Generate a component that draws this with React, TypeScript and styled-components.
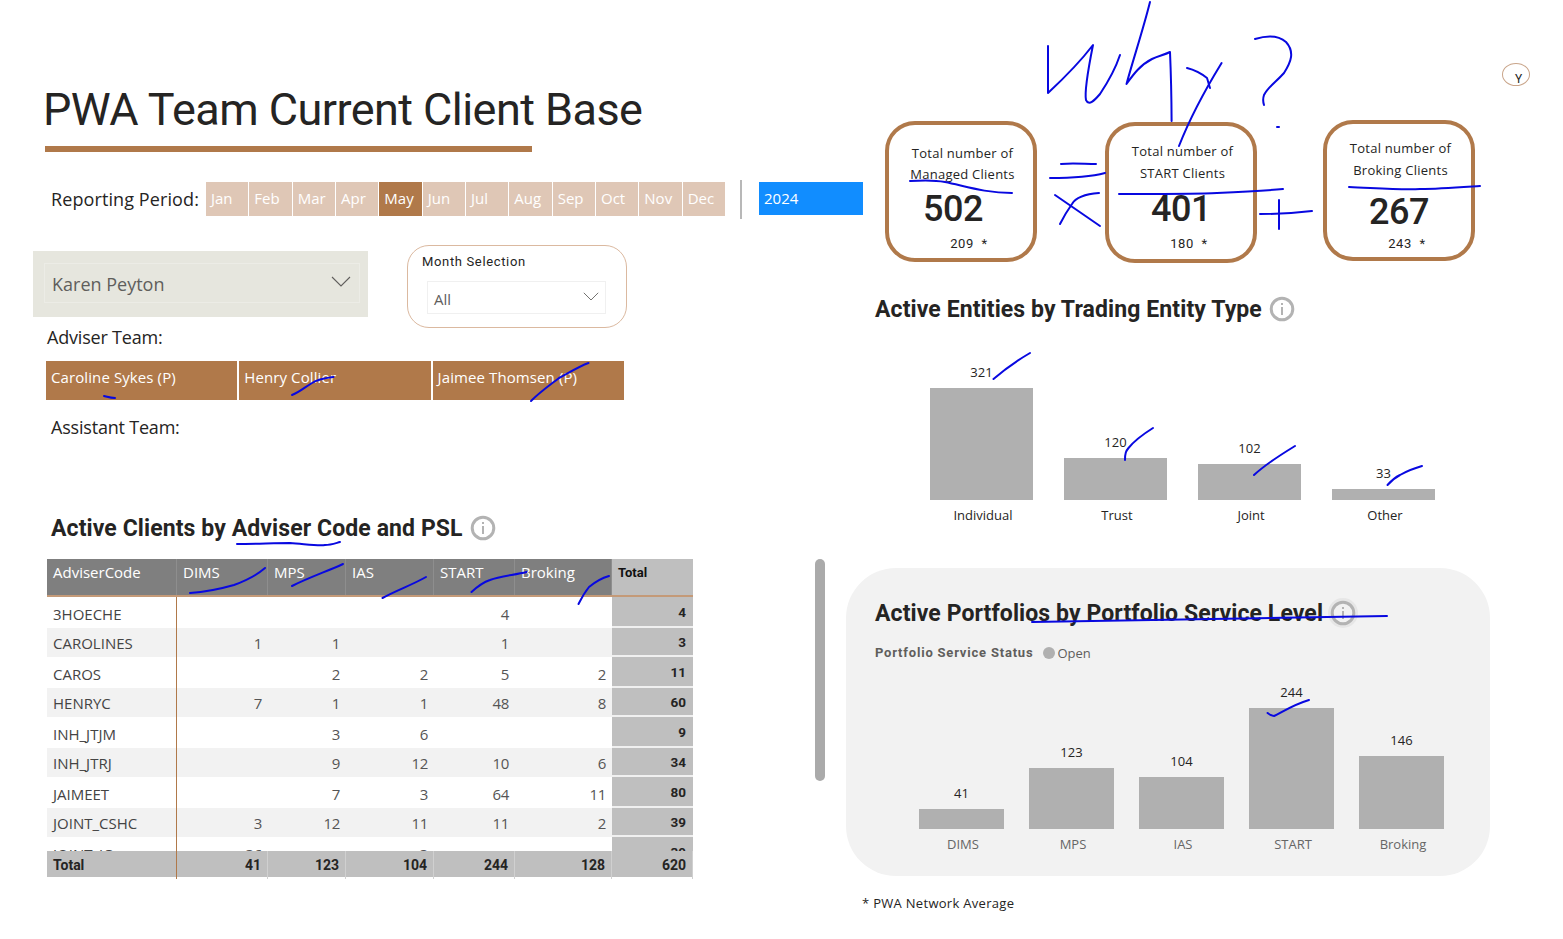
import React, { FunctionComponent } from "react";
import styled, { createGlobalStyle } from "styled-components";

const BODY = `"Open Sans", "Liberation Sans", sans-serif`;
const DIN = `Roboto, "Liberation Sans", sans-serif`;
const BROWN = "#b0794a";

const GlobalStyle = createGlobalStyle`
  html, body {
    margin: 0;
    padding: 0;
    background: #ffffff;
    overflow: hidden;
  }
  * { box-sizing: border-box; }
`;

const Page = styled.div`
  position: relative;
  width: 1563px;
  height: 939px;
  display: flex;
  font-family: ${BODY};
  color: #252423;
  overflow: hidden;
`;

const LeftColumn = styled.div`
  width: 815px;
  flex: none;
  padding-top: 82px;
`;

const Title = styled.h1`
  margin: 0 0 0 43px;
  font: 400 45px/55px ${DIN};
  letter-spacing: -0.55px;
  color: #252423;
`;

const TitleRule = styled.div`
  margin: 9px 0 0 45px;
  width: 487px;
  height: 6px;
  background: ${BROWN};
`;

const PeriodRow = styled.div`
  display: flex;
  align-items: center;
  margin: 27px 0 0 51px;
  height: 40px;
  & > * { flex: none; }
`;

const PeriodLabel = styled.div`
  width: 155px;
  font-size: 18px;
  letter-spacing: 0.1px;
`;

const MonthGrid = styled.div`
  display: grid;
  grid-template-columns: repeat(12, 1fr);
  gap: 1px;
  width: 519px;
  height: 34px;
`;

const MonthTile = styled.div<{ $on?: boolean }>`
  padding-left: 5px;
  font-size: 15px;
  line-height: 33px;
  color: #ffffff;
  background: ${(p) => (p.$on ? BROWN : "#dfc7b6")};
`;

const PeriodDivider = styled.div`
  width: 2px;
  height: 39px;
  margin: 0 17px 0 15px;
  background: #b8b8b8;
`;

const YearBox = styled.div`
  width: 104px;
  height: 33px;
  margin-bottom: 1px;
  padding-left: 5px;
  font-size: 15px;
  line-height: 32px;
  color: #ffffff;
  background: #118dff;
`;

const SelectRow = styled.div`
  display: flex;
  align-items: flex-start;
  margin: 26px 0 0 33px;
`;

const PersonSelect = styled.div`
  width: 335px;
  height: 66px;
  margin-top: 6px;
  padding: 12px 8px 14px 11px;
  background: #e6e6de;
`;

const PersonInner = styled.div`
  display: flex;
  align-items: center;
  justify-content: space-between;
  height: 40px;
  padding: 2px 8px 0 7px;
  border: 1px solid #ecece6;
  font-size: 18px;
  color: #605e5c;
  & > svg { margin-top: -6px; }
`;

const MonthCard = styled.div`
  width: 220px;
  height: 83px;
  margin-left: 39px;
  padding: 7px 14px;
  border: 1px solid #dbb9a0;
  border-radius: 22px;
`;

const MonthCardLabel = styled.div`
  font: 400 13px/17px ${DIN};
  letter-spacing: 0.65px;
  color: #252423;
`;

const MonthSelect = styled.div`
  display: flex;
  align-items: center;
  justify-content: space-between;
  height: 33px;
  margin: 11px 0 0 5px;
  width: 179px;
  padding: 3px 6px 0;
  border: 1px solid #f0f0f0;
  font-size: 15px;
  color: #605e5c;
  & > svg { margin-top: -5px; }
`;

const TeamLabel = styled.div<{ $left: number; $top: number }>`
  margin: ${(p) => p.$top}px 0 0 ${(p) => p.$left}px;
  font-size: 18px;
  line-height: 24px;
  letter-spacing: -0.2px;
`;

const TeamRow = styled.div`
  display: flex;
  gap: 2px;
  margin: 12px 0 0 46px;
`;

const TeamTile = styled.div`
  width: 191.3px;
  height: 39px;
  padding-left: 5px;
  font-size: 15px;
  line-height: 32px;
  letter-spacing: 0.1px;
  color: #ffffff;
  background: ${BROWN};
`;

const Heading = styled.h2<{ $left: number; $top: number }>`
  display: flex;
  align-items: center;
  gap: 8px;
  margin: ${(p) => p.$top}px 0 0 ${(p) => p.$left}px;
  font: 700 23px/30px ${DIN};
  letter-spacing: 0.1px;
  color: #252423;
`;

const ClientTable = styled.div`
  width: 646px;
  margin: 14px 0 0 47px;
`;

const COLUMNS = "130px 91px 78px 88px 81px 97px 81px";

const TableHead = styled.div`
  display: grid;
  grid-template-columns: ${COLUMNS};
  height: 38px;
  border-bottom: 2px solid #c49a78;
`;

const HeadCell = styled.div`
  padding-left: 6px;
  font-size: 15px;
  line-height: 27px;
  color: #ffffff;
  background: #7f7f7f;
  border-right: 1px solid #8e8e8e;
`;

const HeadTotal = styled.div`
  padding-left: 6px;
  font: 700 13px/28px ${DIN};
  color: #111111;
  background: #bfbfbf;
`;

const TableBody = styled.div`
  height: 254px;
  overflow: hidden;
`;

const BodyRow = styled.div<{ $odd: boolean }>`
  display: grid;
  grid-template-columns: ${COLUMNS};
  height: ${(p) => (p.$odd ? 29 : 31)}px;
  background: ${(p) => (p.$odd ? "#f2f2f2" : "#ffffff")};
`;

const CodeCell = styled.div<{ $odd: boolean }>`
  padding: ${(p) => (p.$odd ? 5 : 7)}px 0 0 6px;
  font-size: 15px;
  line-height: 20px;
  color: #444444;
  border-right: 1px solid ${BROWN};
`;

const NumCell = styled.div<{ $odd: boolean }>`
  padding: ${(p) => (p.$odd ? 5 : 7)}px 6px 0 0;
  font-size: 15px;
  line-height: 20px;
  text-align: right;
  letter-spacing: -0.3px;
  color: #555555;
`;

const TotalCell = styled.div<{ $odd: boolean }>`
  padding: ${(p) => (p.$odd ? 4 : 5)}px 7px 0 0;
  font: 700 13.5px/20px ${DIN};
  text-align: right;
  color: #252423;
  background: #bfbfbf;
  border-bottom: 2px solid #f0f0f0;
`;

const FootRow = styled.div`
  display: grid;
  grid-template-columns: ${COLUMNS};
  height: 26px;
  background: #bfbfbf;
`;

const FootLabel = styled.div`
  padding-left: 6px;
  font: 700 14px/28px ${DIN};
  color: #252423;
  border-right: 1px solid ${BROWN};
`;

const FootNum = styled.div`
  padding-right: 6px;
  font: 700 14px/28px ${DIN};
  text-align: right;
  color: #252423;
  border-right: 1px solid #d0d0d0;
`;

const ScrollThumb = styled.div`
  flex: none;
  width: 10px;
  height: 222px;
  margin-top: 559px;
  border-radius: 5px;
  background: #aaaaaa;
`;

const RightColumn = styled.div`
  width: 700px;
  flex: none;
  padding-left: 21px;
`;

const KpiRow = styled.div`
  display: flex;
  align-items: flex-start;
  height: 263px;
  padding: 120px 0 0 39px;
`;

const KpiCard = styled.div<{ $gap: number; $drop: number; $pad: number }>`
  display: flex;
  flex-direction: column;
  align-items: center;
  width: 152px;
  height: 141px;
  margin: ${(p) => p.$drop}px ${(p) => p.$gap}px 0 0;
  padding-top: ${(p) => p.$pad}px;
  border: 4px solid ${BROWN};
  border-radius: 30px;
`;

const KpiCaption = styled.div<{ $line: number }>`
  padding-left: 3px;
  font-size: 13px;
  line-height: ${(p) => p.$line}px;
  text-align: center;
  letter-spacing: 0.25px;
  color: #252423;
`;

const KpiValue = styled.div<{ $top: number; $offset: number }>`
  margin: ${(p) => p.$top}px ${(p) => p.$offset}px 0 0;
  font: 500 36px/42px ${DIN};
  letter-spacing: -0.5px;
  color: #252423;
`;

const KpiNote = styled.div<{ $top: number }>`
  margin-top: ${(p) => p.$top}px;
  padding-left: 16px;
  font: 400 13px/18px ${DIN};
  letter-spacing: 0.6px;
  color: #252423;
`;

const EntityChart = styled.div`
  display: flex;
  align-items: flex-end;
  gap: 31px;
  height: 172px;
  margin: 2px 0 0 84px;
`;

const EntityBar = styled.div`
  display: flex;
  flex-direction: column;
  align-items: center;
  width: 103px;
`;

const BarValue = styled.div`
  margin-bottom: 7px;
  font-size: 13px;
  line-height: 18px;
  color: #252423;
`;

const BarFill = styled.div`
  width: 100%;
  background: #b0b0b0;
`;

const EntityLabels = styled.div`
  display: flex;
  gap: 31px;
  margin: 5px 0 0 84px;
`;

const BarLabel = styled.div<{ $width: number; $muted?: boolean }>`
  width: ${(p) => p.$width}px;
  padding-left: 3px;
  font-size: 13px;
  line-height: 20px;
  text-align: center;
  color: ${(p) => (p.$muted ? "#666666" : "#252423")};
`;

const PortfolioPanel = styled.div`
  width: 644px;
  height: 308px;
  margin-top: 43px;
  padding: 30px 0 0 29px;
  border-radius: 50px;
  background: #f2f2f2;
`;

const Legend = styled.div`
  display: flex;
  align-items: center;
  margin-top: 14px;
  font-size: 13px;
  line-height: 18px;
  color: #605e5c;
`;

const LegendTitle = styled.span`
  margin-right: 10px;
  font: 700 13px/18px ${DIN};
  letter-spacing: 0.8px;
`;

const LegendDot = styled.span`
  width: 12px;
  height: 12px;
  margin-right: 2px;
  border-radius: 50%;
  background: #b0b0b0;
`;

const PortfolioChart = styled.div`
  display: flex;
  align-items: flex-end;
  gap: 25px;
  height: 153px;
  margin: 14px 0 0 44px;
`;

const PortfolioBar = styled(EntityBar)`
  width: 85px;
`;

const PortfolioLabels = styled.div`
  display: flex;
  gap: 25px;
  margin: 5px 0 0 44px;
`;

const Footnote = styled.div`
  margin: 17px 0 0 16px;
  font-size: 13px;
  line-height: 20px;
  letter-spacing: 0.3px;
  color: #252423;
`;

const ClusterBubble = styled.div`
  position: absolute;
  left: 1502px;
  top: 63px;
  width: 28px;
  height: 23px;
  padding: 8px 0 0 12px;
  border: 1px solid #c9a58a;
  border-radius: 50%;
  font: 400 12px/14px ${DIN};
  color: #252423;
`;

const Scribbles = styled.svg`
  position: absolute;
  left: 0;
  top: 0;
  pointer-events: none;
`;

const Chevron: FunctionComponent<{ size: number }> = ({ size }) => (
  <svg width={size} height={size * 0.55} viewBox="0 0 20 11" fill="none">
    <path d="M1 1l9 9 9-9" stroke="#605e5c" strokeWidth="1.1" />
  </svg>
);

const InfoIcon: FunctionComponent<{ halo?: boolean }> = ({ halo }) => (
  <svg width="32" height="32" viewBox="0 0 32 32" style={{ margin: "-1px -4px 1px" }}>
    {halo && <circle cx="16" cy="16" r="15" fill="#e6e6e6" />}
    <circle cx="16" cy="16" r="10.8" fill={halo ? "#f2f2f2" : "#ffffff"} stroke="#b3b3b3" strokeWidth="3" />
    <rect x="15" y="14" width="2" height="8" fill="#b3b3b3" />
    <rect x="15" y="10" width="2" height="2" fill="#b3b3b3" />
  </svg>
);

const months = ["Jan", "Feb", "Mar", "Apr", "May", "Jun", "Jul", "Aug", "Sep", "Oct", "Nov", "Dec"];

const rows: [string, string, string, string, string, string, string][] = [
  ["3HOECHE", "", "", "", "4", "", "4"],
  ["CAROLINES", "1", "1", "", "1", "", "3"],
  ["CAROS", "", "2", "2", "5", "2", "11"],
  ["HENRYC", "7", "1", "1", "48", "8", "60"],
  ["INH_JTJM", "", "3", "6", "", "", "9"],
  ["INH_JTRJ", "", "9", "12", "10", "6", "34"],
  ["JAIMEET", "", "7", "3", "64", "11", "80"],
  ["JOINT_CSHC", "3", "12", "11", "11", "2", "39"],
  ["JOINT_JC", "36", "", "3", "", "", "39"],
];

const kpis = [
  { top: "Managed Clients", value: "502", note: "209", gap: 68, drop: 1, pad: 18, line: 21, valueTop: 3, offset: 16, noteTop: 5 },
  { top: "START Clients", value: "401", note: "180", gap: 66, drop: 2, pad: 14, line: 22, valueTop: 4, offset: 0, noteTop: 5 },
  { top: "Broking Clients", value: "267", note: "243", gap: 0, drop: 0, pad: 13, line: 22, valueTop: 10, offset: 0, noteTop: 2 },
];

const entities = [
  { name: "Individual", value: 321, height: 112 },
  { name: "Trust", value: 120, height: 42 },
  { name: "Joint", value: 102, height: 36 },
  { name: "Other", value: 33, height: 11 },
];

const portfolios = [
  { name: "DIMS", value: 41, height: 20 },
  { name: "MPS", value: 123, height: 61 },
  { name: "IAS", value: 104, height: 52 },
  { name: "START", value: 244, height: 121 },
  { name: "Broking", value: 146, height: 73 },
];

const strokes = [
  // why ?
  "M1048 46L1048 93C1062 80 1080 62 1093 45C1089 65 1084 90 1086 100C1089 106 1094 101 1100 94C1108 82 1115 70 1120 55",
  "M1150 2C1143 30 1133 60 1126.5 84C1133 75 1140 65 1152 59C1158 56 1164 55 1170 52C1171 75 1171.5 100 1171.6 121",
  "M1187 68C1195 70 1202 74 1207 78C1208 81 1209 85 1210 88",
  "M1221.6 63C1205 90 1190 118 1179 146",
  "M1255 39C1265 36 1278 35 1286 42C1295 52 1291 62 1284 73C1276 82 1268 87 1264 95C1263 98 1263 102 1264 105",
  "M1277 127L1279 127",
  // = x +
  "M1061 164C1072 163 1085 164 1096 164",
  "M1050 178C1068 178 1090 177 1105 173",
  "M1055 195L1100 226",
  "M1099 193C1085 194 1076 197 1072 204C1067 211 1063 218 1060 224",
  "M1260 214C1280 214 1295 213 1312 211",
  "M1279 200L1279 229",
  // kpi underlines
  "M910 181C925 180 935 180 945 182C965 186 985 193 1012 193",
  "M1119 194C1160 194 1200 194 1217 193C1240 192 1262 191 1283 189",
  "M1349 187C1375 188 1400 190 1420 189C1440 189 1465 187 1480 186",
  // adviser tiles
  "M104 396C108 397 111 398 115 398",
  "M292 395C300 392 305 387 312 383C318 379 326 378 333.5 377",
  "M531 401C540 392 550 385 559 378C570 372 580 366 588.5 363",
  // table heading + header cells
  "M237 544C255 544 275 543 290 543C305 544 318 546 325 545C331 545 336 543 340 542",
  "M190 593C205 592 220 589 234 585C245 581 257 575 265 568",
  "M292 586C310 577 328 571 343 564",
  "M382.5 598C397 590 412 585 426 577",
  "M471.5 592C478 586 484 582 490 580C500 576 515 575 526.5 572",
  "M578.5 604C582 597 585 592 589 587C595 582 602 578 609 576",
  // entity bars
  "M993.5 379C1005 369 1018 360 1030 353",
  "M1125 460C1125 453 1126 451 1128.5 448C1135 440 1145 433 1153 428",
  "M1254 475C1267 463 1282 454 1295 446",
  "M1387.5 485C1392 480 1396 477 1400 475C1407 471 1415 468 1422 466",
  // portfolio panel
  "M1032 622C1090 621 1150 620 1212 619C1270 618 1330 617 1387 616",
  "M1267.6 713C1270 715 1272 716 1274 716C1282 712 1295 704 1309 700",
];

const App: FunctionComponent = () => {
  return (
    <>
      <GlobalStyle />
      <Page>
        <LeftColumn>
          <Title>PWA Team Current Client Base</Title>
          <TitleRule />
          <PeriodRow>
            <PeriodLabel>Reporting Period:</PeriodLabel>
            <MonthGrid>
              {months.map((m) => (
                <MonthTile key={m} $on={m === "May"}>{m}</MonthTile>
              ))}
            </MonthGrid>
            <PeriodDivider />
            <YearBox>2024</YearBox>
          </PeriodRow>
          <SelectRow>
            <PersonSelect>
              <PersonInner>
                Karen Peyton
                <Chevron size={20} />
              </PersonInner>
            </PersonSelect>
            <MonthCard>
              <MonthCardLabel>Month Selection</MonthCardLabel>
              <MonthSelect>
                All
                <Chevron size={16} />
              </MonthSelect>
            </MonthCard>
          </SelectRow>
          <TeamLabel $left={47} $top={-3}>Adviser Team:</TeamLabel>
          <TeamRow>
            <TeamTile>Caroline Sykes (P)</TeamTile>
            <TeamTile>Henry Collier</TeamTile>
            <TeamTile>Jaimee Thomsen (P)</TeamTile>
          </TeamRow>
          <TeamLabel $left={51} $top={15}>Assistant Team:</TeamLabel>
          <Heading $left={51} $top={74}>
            Active Clients by Adviser Code and PSL
            <InfoIcon />
          </Heading>
          <ClientTable>
            <TableHead>
              <HeadCell>AdviserCode</HeadCell>
              <HeadCell>DIMS</HeadCell>
              <HeadCell>MPS</HeadCell>
              <HeadCell>IAS</HeadCell>
              <HeadCell>START</HeadCell>
              <HeadCell>Broking</HeadCell>
              <HeadTotal>Total</HeadTotal>
            </TableHead>
            <TableBody>
              {rows.map((r, i) => {
                const odd = i % 2 === 1;
                return (
                  <BodyRow key={r[0]} $odd={odd}>
                    <CodeCell $odd={odd}>{r[0]}</CodeCell>
                    {r.slice(1, 6).map((v, j) => (
                      <NumCell key={j} $odd={odd}>{v}</NumCell>
                    ))}
                    <TotalCell $odd={odd}>{r[6]}</TotalCell>
                  </BodyRow>
                );
              })}
            </TableBody>
            <FootRow>
              <FootLabel>Total</FootLabel>
              <FootNum>41</FootNum>
              <FootNum>123</FootNum>
              <FootNum>104</FootNum>
              <FootNum>244</FootNum>
              <FootNum>128</FootNum>
              <FootNum>620</FootNum>
            </FootRow>
          </ClientTable>
        </LeftColumn>
        <ScrollThumb />
        <RightColumn>
          <KpiRow>
            {kpis.map((k) => (
              <KpiCard key={k.value} $gap={k.gap} $drop={k.drop} $pad={k.pad}>
                <KpiCaption $line={k.line}>Total number of<br />{k.top}</KpiCaption>
                <KpiValue $top={k.valueTop} $offset={k.offset}>{k.value}</KpiValue>
                <KpiNote $top={k.noteTop}>{k.note} &nbsp;*</KpiNote>
              </KpiCard>
            ))}
          </KpiRow>
          <Heading $left={29} $top={31}>
            Active Entities by Trading Entity Type
            <InfoIcon />
          </Heading>
          <EntityChart>
            {entities.map((e) => (
              <EntityBar key={e.name}>
                <BarValue>{e.value}</BarValue>
                <BarFill style={{ height: e.height }} />
              </EntityBar>
            ))}
          </EntityChart>
          <EntityLabels>
            {entities.map((e) => (
              <BarLabel key={e.name} $width={103}>{e.name}</BarLabel>
            ))}
          </EntityLabels>
          <PortfolioPanel>
            <Heading $left={0} $top={0}>
              Active Portfolios by Portfolio Service Level
              <InfoIcon halo />
            </Heading>
            <Legend>
              <LegendTitle>Portfolio Service Status</LegendTitle>
              <LegendDot />
              Open
            </Legend>
            <PortfolioChart>
              {portfolios.map((p) => (
                <PortfolioBar key={p.name}>
                  <BarValue>{p.value}</BarValue>
                  <BarFill style={{ height: p.height }} />
                </PortfolioBar>
              ))}
            </PortfolioChart>
            <PortfolioLabels>
              {portfolios.map((p) => (
                <BarLabel key={p.name} $width={85} $muted>{p.name}</BarLabel>
              ))}
            </PortfolioLabels>
          </PortfolioPanel>
          <Footnote>* PWA Network Average</Footnote>
        </RightColumn>
        <ClusterBubble>Y</ClusterBubble>
        <Scribbles width="1563" height="939" viewBox="0 0 1563 939" fill="none">
          {strokes.map((d, i) => (
            <path key={i} d={d} stroke="#0808e0" strokeWidth="2" strokeLinecap="round" strokeLinejoin="round" />
          ))}
        </Scribbles>
      </Page>
    </>
  );
};

export default App;
